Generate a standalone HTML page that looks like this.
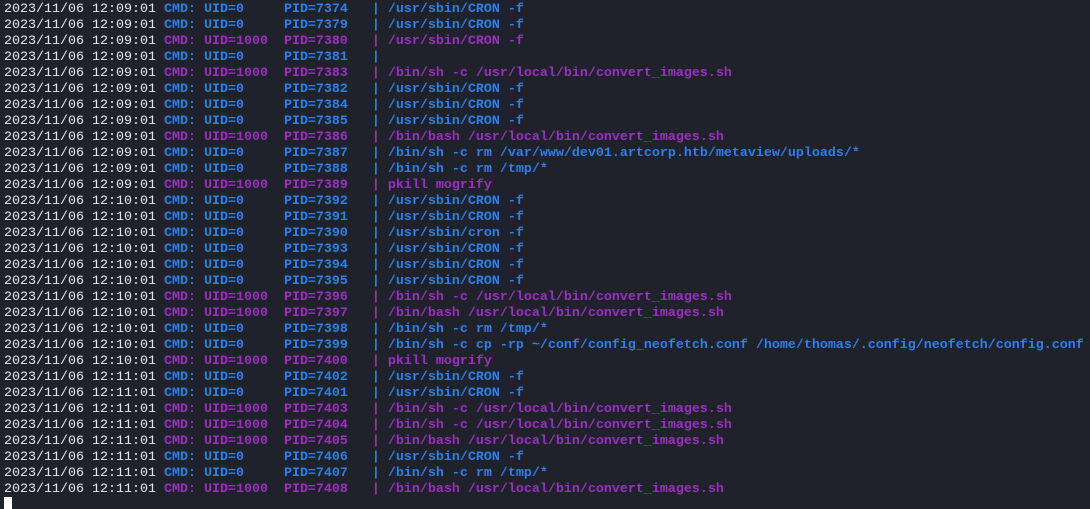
<!DOCTYPE html>
<html><head><meta charset="utf-8"><style>
html,body{margin:0;padding:0;background:#20222b;width:1090px;height:509px;overflow:hidden}
pre{margin:0;position:absolute;left:4px;top:2px;font-family:"Liberation Mono",monospace;font-size:13.33px;line-height:16px;color:#e8e8ea;white-space:pre}
.b{color:#2f7fe8;font-weight:bold}.p{color:#9b30c0;font-weight:bold}
.cur{position:absolute;left:4px;top:497px;width:8px;height:12px;background:#fff}
</style></head><body>
<pre>2023/11/06 12:09:01 <span class="b">CMD: UID=0     PID=7374   | /usr/sbin/CRON -f</span>
2023/11/06 12:09:01 <span class="b">CMD: UID=0     PID=7379   | /usr/sbin/CRON -f</span>
2023/11/06 12:09:01 <span class="p">CMD: UID=1000  PID=7380   | /usr/sbin/CRON -f</span>
2023/11/06 12:09:01 <span class="b">CMD: UID=0     PID=7381   |</span>
2023/11/06 12:09:01 <span class="p">CMD: UID=1000  PID=7383   | /bin/sh -c /usr/local/bin/convert_images.sh</span>
2023/11/06 12:09:01 <span class="b">CMD: UID=0     PID=7382   | /usr/sbin/CRON -f</span>
2023/11/06 12:09:01 <span class="b">CMD: UID=0     PID=7384   | /usr/sbin/CRON -f</span>
2023/11/06 12:09:01 <span class="b">CMD: UID=0     PID=7385   | /usr/sbin/CRON -f</span>
2023/11/06 12:09:01 <span class="p">CMD: UID=1000  PID=7386   | /bin/bash /usr/local/bin/convert_images.sh</span>
2023/11/06 12:09:01 <span class="b">CMD: UID=0     PID=7387   | /bin/sh -c rm /var/www/dev01.artcorp.htb/metaview/uploads/*</span>
2023/11/06 12:09:01 <span class="b">CMD: UID=0     PID=7388   | /bin/sh -c rm /tmp/*</span>
2023/11/06 12:09:01 <span class="p">CMD: UID=1000  PID=7389   | pkill mogrify</span>
2023/11/06 12:10:01 <span class="b">CMD: UID=0     PID=7392   | /usr/sbin/CRON -f</span>
2023/11/06 12:10:01 <span class="b">CMD: UID=0     PID=7391   | /usr/sbin/CRON -f</span>
2023/11/06 12:10:01 <span class="b">CMD: UID=0     PID=7390   | /usr/sbin/cron -f</span>
2023/11/06 12:10:01 <span class="b">CMD: UID=0     PID=7393   | /usr/sbin/CRON -f</span>
2023/11/06 12:10:01 <span class="b">CMD: UID=0     PID=7394   | /usr/sbin/CRON -f</span>
2023/11/06 12:10:01 <span class="b">CMD: UID=0     PID=7395   | /usr/sbin/CRON -f</span>
2023/11/06 12:10:01 <span class="p">CMD: UID=1000  PID=7396   | /bin/sh -c /usr/local/bin/convert_images.sh</span>
2023/11/06 12:10:01 <span class="p">CMD: UID=1000  PID=7397   | /bin/bash /usr/local/bin/convert_images.sh</span>
2023/11/06 12:10:01 <span class="b">CMD: UID=0     PID=7398   | /bin/sh -c rm /tmp/*</span>
2023/11/06 12:10:01 <span class="b">CMD: UID=0     PID=7399   | /bin/sh -c cp -rp ~/conf/config_neofetch.conf /home/thomas/.config/neofetch/config.conf</span>
2023/11/06 12:10:01 <span class="p">CMD: UID=1000  PID=7400   | pkill mogrify</span>
2023/11/06 12:11:01 <span class="b">CMD: UID=0     PID=7402   | /usr/sbin/CRON -f</span>
2023/11/06 12:11:01 <span class="b">CMD: UID=0     PID=7401   | /usr/sbin/CRON -f</span>
2023/11/06 12:11:01 <span class="p">CMD: UID=1000  PID=7403   | /bin/sh -c /usr/local/bin/convert_images.sh</span>
2023/11/06 12:11:01 <span class="p">CMD: UID=1000  PID=7404   | /bin/sh -c /usr/local/bin/convert_images.sh</span>
2023/11/06 12:11:01 <span class="p">CMD: UID=1000  PID=7405   | /bin/bash /usr/local/bin/convert_images.sh</span>
2023/11/06 12:11:01 <span class="b">CMD: UID=0     PID=7406   | /usr/sbin/CRON -f</span>
2023/11/06 12:11:01 <span class="b">CMD: UID=0     PID=7407   | /bin/sh -c rm /tmp/*</span>
2023/11/06 12:11:01 <span class="p">CMD: UID=1000  PID=7408   | /bin/bash /usr/local/bin/convert_images.sh</span></pre>
<div class="cur"></div>
</body></html>
